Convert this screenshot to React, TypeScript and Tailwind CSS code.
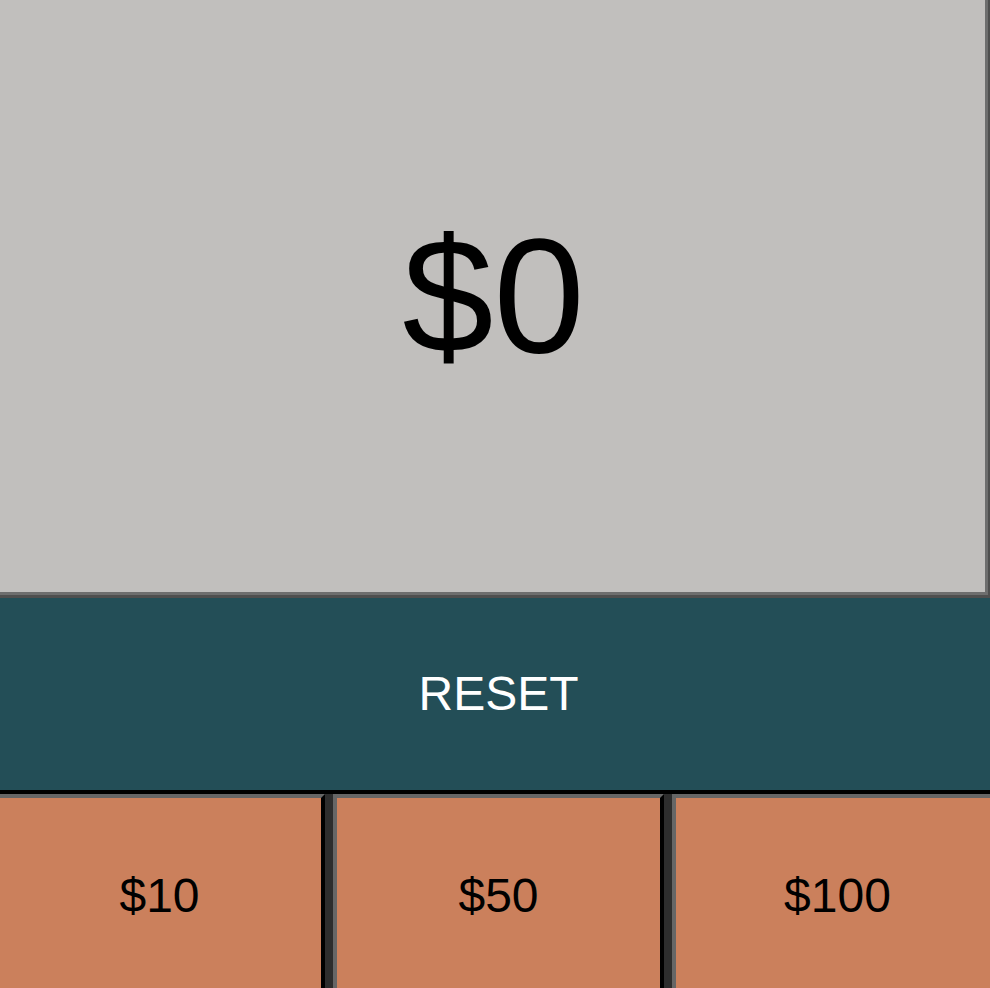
export default function App() {
  const amounts = ["$10", "$50", "$100"];

  return (
    <div className="w-[990px] h-[988px] overflow-hidden bg-[#2d2d2d] font-['Liberation_Sans',Arial,sans-serif]">
      <div className="w-[1009px] -ml-[6px] flex flex-col">
        {/* balance display */}
        <div className="w-[996px] h-[598px] border-r-2 border-b-[3px] border-[#4f4f4f]">
          <div className="h-full pl-2 border-r-[3px] border-b-[3px] border-[#6e6e6e] bg-[#c1bfbd] flex items-center justify-center">
            <span className="text-[164px] leading-none text-black">$0</span>
          </div>
        </div>

        <button className="h-[196px] bg-[#234e57] border-b-4 border-black text-white text-[48px] leading-none flex items-center justify-center">
          RESET
        </button>

        <div className="grid grid-cols-3 gap-2 h-[200px]">
          {amounts.map((a) => (
            <button
              key={a}
              className="bg-[#cb805c] border-4 border-t-[#666666] border-l-[#666666] border-r-black border-b-black text-black text-[48px] leading-none flex items-center justify-center pt-1"
            >
              {a}
            </button>
          ))}
        </div>
      </div>
    </div>
  );
}
